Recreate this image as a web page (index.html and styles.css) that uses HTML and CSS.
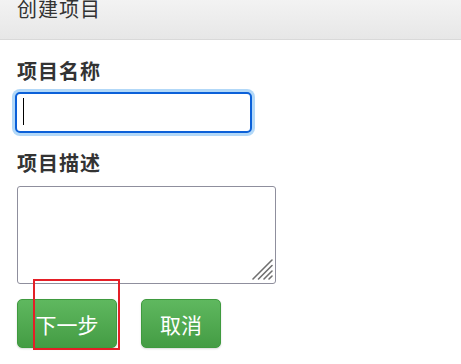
FILE: index.html
```html
<!DOCTYPE html>
<html lang="zh-CN">
<head>
<meta charset="utf-8">
<title>创建项目</title>
<link rel="stylesheet" href="styles.css">
</head>
<body>
<div class="header"><span class="title">创建项目</span></div>
<div class="form">
  <div class="label">项目名称</div>
  <div class="input-wrap">
    <input class="input focused" type="text">
    <span class="caret"></span>
  </div>
  <div class="label label-2">项目描述</div>
  <div class="textarea-wrap">
    <textarea class="textarea"></textarea>
    <svg class="grip" width="22" height="22" viewBox="0 0 22 22">
      <g stroke="#707070" stroke-width="1.6" stroke-linecap="round">
        <line x1="2" y1="21" x2="21" y2="2"/>
        <line x1="7.5" y1="21" x2="21" y2="7.5"/>
        <line x1="13" y1="21" x2="21" y2="13"/>
        <line x1="18" y1="21" x2="21" y2="18"/>
      </g>
    </svg>
  </div>
  <div class="actions">
    <button class="btn btn-next" type="button">下一步</button>
    <button class="btn btn-cancel" type="button">取消</button>
  </div>
</div>
<div class="highlight"></div>
</body>
</html>
```
FILE: styles.css
```css
html, body {
  margin: 0;
  padding: 0;
  background: #fff;
}
body {
  font-family: "Noto Sans CJK SC", "Noto Sans", sans-serif;
  color: #333;
  position: relative;
  width: 461px;
  height: 364px;
  overflow: hidden;
}
.header {
  height: 41px;
  box-sizing: border-box;
  border-bottom: 1px solid #d9d9d9;
  background: linear-gradient(#f3f3f3, #e7e7e7);
  padding-left: 17px;
}
.title {
  display: block;
  font-size: 20px;
  line-height: 20px;
  margin-top: -1px;
  color: #333;
  letter-spacing: 1px;
}
.form {
  padding: 0 17px;
}
.label {
  font-size: 20px;
  font-weight: bold;
  line-height: 26px;
  margin-top: 18px;
  color: #333;
  letter-spacing: 1px;
}
.label-2 {
  margin-top: 17px;
}
.input-wrap {
  position: relative;
  margin-top: 8px;
  margin-left: -2px;
  width: 237px;
  height: 41px;
}
.input {
  display: block;
  box-sizing: border-box;
  width: 237px;
  height: 41px;
  margin: 0;
  border: 2px solid #0b60d8;
  border-radius: 5px;
  background: #fff;
  outline: none;
  padding: 0 6px;
  font-size: 18px;
}
.input.focused {
  box-shadow: 0 0 0 3px #b2d8f8;
}
.caret {
  position: absolute;
  left: 8px;
  top: 6px;
  width: 1px;
  height: 27px;
  background: #000;
}
.textarea-wrap {
  position: relative;
  margin-top: 10px;
  width: 259px;
  height: 98px;
}
.textarea {
  display: block;
  box-sizing: border-box;
  width: 259px;
  height: 98px;
  margin: 0;
  border: 1px solid #8f8f9d;
  border-radius: 3px;
  resize: none;
  background: #fff;
  outline: none;
}
.grip {
  position: absolute;
  right: 3px;
  bottom: 4px;
}
.actions {
  display: flex;
  gap: 24px;
  margin-top: 15px;
}
.btn {
  height: 49px;
  box-sizing: border-box;
  border: 1px solid #3f9a3f;
  border-radius: 5px;
  background: linear-gradient(#5fb85f, #449c44);
  color: #fff;
  font-family: "Noto Sans CJK SC", "Noto Sans", sans-serif;
  font-size: 21px;
  padding: 0;
  box-shadow: 0 1px 2px rgba(0, 0, 0, 0.15);
}
.btn-next {
  width: 100px;
}
.btn-cancel {
  width: 80px;
}
.highlight {
  position: absolute;
  left: 33px;
  top: 279px;
  width: 87px;
  height: 71px;
  box-sizing: border-box;
  border: 2px solid #e41f27;
}
```
